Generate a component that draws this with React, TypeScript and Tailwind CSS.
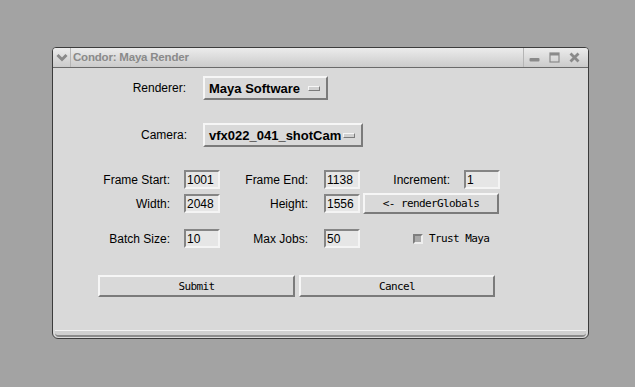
import React from "react";

const sans = { fontFamily: '"Liberation Sans", Arial, sans-serif' };
const mono = { fontFamily: '"DejaVu Sans Mono", "Liberation Mono", monospace' };

const raised =
  "border-2 border-t-[#f6f6f6] border-l-[#f6f6f6] border-r-[#7b7b7b] border-b-[#7b7b7b] bg-[#d9d9d9]";
const sunken =
  "border-2 border-t-[#858585] border-l-[#858585] border-r-[#f4f4f4] border-b-[#f4f4f4] bg-[#e6e6e6]";

function OptionMenu({ value, width }: { value: string; width: string }) {
  return (
    <div className={`${raised} ${width} h-[24px] flex items-center justify-between pl-[4px] pr-[6px]`}>
      <span className="text-[13px] font-bold text-black leading-none" style={sans}>
        {value}
      </span>
      <span className="w-[12px] h-[5px] border border-t-[#f6f6f6] border-l-[#f6f6f6] border-r-[#7b7b7b] border-b-[#7b7b7b] bg-[#d0d0d0]" />
    </div>
  );
}

function Entry({ value }: { value: string }) {
  return (
    <div className={`${sunken} w-[36px] h-[19px] flex items-center pl-[1px]`}>
      <span className="text-[12px] text-black leading-none" style={sans}>
        {value}
      </span>
    </div>
  );
}

function Label({ text, width }: { text: string; width: string }) {
  return (
    <div className={`${width} text-right text-[12px] text-black leading-none`} style={sans}>
      {text}
    </div>
  );
}

function MonoText({ children }: { children: React.ReactNode }) {
  return (
    <span className="block text-[11px] tracking-[-0.6px] text-black leading-none" style={mono}>
      {children}
    </span>
  );
}

export default function App() {
  return (
    <div className="w-[635px] h-[387px] bg-[#a3a3a3] pt-[47px] pl-[52px] overflow-hidden">
      <div className="w-[537px] h-[292px] rounded-t-[4px] rounded-b-[6px] border border-[#3c3c3c] bg-[#d9d9d9] flex flex-col overflow-hidden">
        {/* title bar */}
        <div className="h-[20px] flex items-center bg-gradient-to-b from-[#ececec] to-[#cbcbcb] border-b border-[#6a6a6a]">
          <div className="w-[18px] h-full flex items-center justify-center border-r border-[#b5b5b5]">
            <svg width="12" height="9" viewBox="0 0 12 9">
              <polyline points="1.5,2 6,6.5 10.5,2" fill="none" stroke="#8a8a8a" strokeWidth="3" />
            </svg>
          </div>
          <span className="ml-[2px] text-[11.5px] font-bold tracking-[-0.2px] text-[#8a8a8a]" style={sans}>
            Condor: Maya Render
          </span>
          <div className="ml-auto h-full flex items-center border-l border-[#b5b5b5] pl-[5px] pr-[8px] gap-[9px]">
            <svg width="11" height="11" viewBox="0 0 11 11">
              <rect x="0.5" y="6" width="10" height="3.5" fill="#8a8a8a" rx="1" />
            </svg>
            <svg width="11" height="11" viewBox="0 0 11 11">
              <rect x="1" y="1" width="9" height="9" fill="none" stroke="#8a8a8a" strokeWidth="1.2" />
              <rect x="1" y="1" width="9" height="2.5" fill="#8a8a8a" />
            </svg>
            <svg width="11" height="11" viewBox="0 0 11 11">
              <path d="M1.5 1.5 L9.5 9.5 M9.5 1.5 L1.5 9.5" stroke="#8a8a8a" strokeWidth="2.8" />
            </svg>
          </div>
        </div>

        {/* body */}
        <div className="flex-1 flex flex-col pt-[8px] border-x-[3px] border-[#d9d9d9]">
          <div className="flex items-center">
            <Label text="Renderer:" width="w-[130px]" />
            <div className="ml-[17px]">
              <OptionMenu value="Maya Software" width="w-[125px]" />
            </div>
          </div>

          <div className="flex items-center mt-[23px]">
            <Label text="Camera:" width="w-[131px]" />
            <div className="ml-[16px]">
              <OptionMenu value="vfx022_041_shotCam" width="w-[160px]" />
            </div>
          </div>

          <div className="flex items-center mt-[23px]">
            <Label text="Frame Start:" width="w-[114px]" />
            <div className="ml-[14px]">
              <Entry value="1001" />
            </div>
            <Label text="Frame End:" width="w-[88px]" />
            <div className="ml-[16px]">
              <Entry value="1138" />
            </div>
            <Label text="Increment:" width="w-[90px]" />
            <div className="ml-[14px]">
              <Entry value="1" />
            </div>
          </div>

          <div className="flex items-center mt-[4px]">
            <Label text="Width:" width="w-[114px]" />
            <div className="ml-[14px]">
              <Entry value="2048" />
            </div>
            <Label text="Height:" width="w-[88px]" />
            <div className="ml-[16px]">
              <Entry value="1556" />
            </div>
            <div className={`${raised} ml-[3px] w-[136px] h-[21px] flex items-center justify-center`}>
              <MonoText>&lt;- renderGlobals</MonoText>
            </div>
          </div>

          <div className="flex items-center mt-[15px]">
            <Label text="Batch Size:" width="w-[114px]" />
            <div className="ml-[14px]">
              <Entry value="10" />
            </div>
            <Label text="Max Jobs:" width="w-[88px]" />
            <div className="ml-[16px]">
              <Entry value="50" />
            </div>
            <div className="ml-[53px] flex items-center gap-[6px]">
              <span className="w-[10px] h-[10px] border-2 border-t-[#7e7e7e] border-l-[#7e7e7e] border-r-[#efefef] border-b-[#efefef] bg-[#a9a9a9]" />
              <MonoText>Trust Maya</MonoText>
            </div>
          </div>

          <div className="flex items-center mt-[27px] ml-[42px] gap-[4px]">
            <div className={`${raised} w-[197px] h-[22px] flex items-center justify-center`}>
              <MonoText>Submit</MonoText>
            </div>
            <div className={`${raised} w-[196px] h-[22px] flex items-center justify-center`}>
              <MonoText>Cancel</MonoText>
            </div>
          </div>
        </div>

        {/* bottom frame */}
        <div className="h-[7px] mx-[2px] mb-[1px] border-t border-[#f2f2f2] border-b-2 border-b-[#8a8a8a] bg-[#cfcfcf] rounded-b-[4px]" />
      </div>
    </div>
  );
}
